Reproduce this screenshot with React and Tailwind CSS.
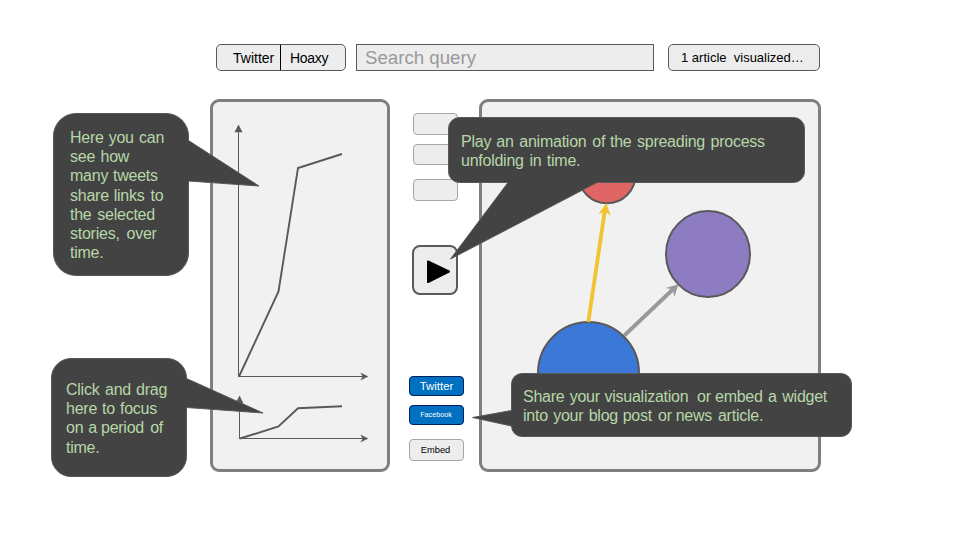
import React from "react";

const lineHere = [
  [["Here", 38.7], ["you", 30.3], ["can", 30]],
  [["see", 30.5], ["how", 34]],
  [["many", 43], ["tweets", 50]],
  [["share", 43.7], ["links", 36.8], ["to", 16]],
  [["the", 27.3], ["selected", 62]],
  [["stories,", 56.5], ["over", 34]],
  [["time.", 40]],
];

const lineDrag = [
  [["Click", 39], ["and", 31], ["drag", 36]],
  [["here", 36], ["to", 18], ["focus", 44]],
  [["on", 22.3], ["a", 12.7], ["period", 49.2], ["of", 16]],
  [["time.", 40]],
];

const linePlay = [
  [["Play", 35.3], ["an", 23], ["animation", 73], ["of", 17.7], ["the", 27], ["spreading", 73.6], ["process", 60]],
  [["unfolding", 68.5], ["in", 17.3], ["time.", 40]],
];

const lineShare = [
  [["Share", 46.7], ["your", 34.8], ["visualization", 92.5], ["or", 18], ["embed", 53], ["a", 14.3], ["widget", 50]],
  [["into", 30.2], ["your", 35.5], ["blog", 34], ["post", 35.3], ["or", 17.7], ["news", 42.3], ["article.", 50]],
];

function Lines({ lines }) {
  return (
    <div className="relative text-[16px] leading-[19.2px] tracking-[-0.25px] text-[#b6d7a8]">
      {lines.map((words, i) => (
        <p key={i} className="flex whitespace-pre">
          {words.map(([word, width], j) => (
            <span key={j} className="shrink-0" style={{ width }}>
              {word + " "}
            </span>
          ))}
        </p>
      ))}
    </div>
  );
}

function Bubble({ box, shape, children }) {
  return (
    <div className={"absolute " + box}>
      <svg className="absolute left-0 top-0 overflow-visible" width="1" height="1">
        <path d={shape} fill="#434343" stroke="#595959" strokeWidth="1" />
      </svg>
      {children}
    </div>
  );
}

function TimelinePanel() {
  return (
    <section className="h-[373px] w-[180px] rounded-[9px] border-[3px] border-[#7f7f7f] bg-[#f1f1f1]">
      <svg width="174" height="367" viewBox="213 102 174 367" fill="none" stroke="#595959">
        <path d="M238.5 377V130" />
        <path d="M238.5 124.5L242.5 132.3H234.5Z" fill="#595959" stroke="none" />
        <path d="M239 376.5H363" />
        <path d="M368.3 376.5L360.3 372.6L362.7 376.5L360.3 380.4Z" fill="#595959" stroke="none" />
        <path d="M239 376.5L278.5 291.5L298 168L342 154" strokeWidth="1.9" />
        <path d="M239.5 439V402" />
        <path d="M239.5 395.5L243.5 403.5H235.5Z" fill="#595959" stroke="none" />
        <path d="M239 438.5H363" />
        <path d="M368.3 438.5L360.3 434.6L362.7 438.5L360.3 442.4Z" fill="#595959" stroke="none" />
        <path d="M240 438.5L278.5 426.5L298 408.2L342 406.2" strokeWidth="1.9" />
      </svg>
    </section>
  );
}

function NetworkPanel() {
  return (
    <section className="h-[373px] w-[342px] rounded-[9px] border-[3px] border-[#7f7f7f] bg-[#f1f1f1]">
      <svg width="336" height="367" viewBox="482 102 336 367" fill="none">
        <ellipse cx="607" cy="175" rx="28.5" ry="28.3" fill="#e06666" stroke="#595959" strokeWidth="2" />
        <ellipse cx="708" cy="254" rx="42" ry="43" fill="#8e7cc3" stroke="#595959" strokeWidth="2" />
        <ellipse cx="588.5" cy="373" rx="50.5" ry="51" fill="#3c78d8" stroke="#595959" strokeWidth="2" />
        <path d="M588.3 322L604.9 210" stroke="#f1c232" strokeWidth="3.8" />
        <path d="M606.3 203L610.7 215.9L605.2 211.5L598.4 214.2Z" fill="#f1c232" />
        <path d="M624.3 335.5L673.3 289" stroke="#999999" strokeWidth="3.8" />
        <path d="M678.5 284.3L674.3 297L672.8 289.6L665.7 288Z" fill="#999999" />
      </svg>
    </section>
  );
}

function Controls() {
  return (
    <div className="flex w-[89px] flex-col">
      <div className="ml-[23px] mt-[14px] h-[22px] w-[45px] rounded-[4px] border border-[#a6a6a6] bg-[#ededed]" />
      <div className="ml-[23px] mt-[9px] h-[21px] w-[45px] rounded-[4px] border border-[#a6a6a6] bg-[#ededed]" />
      <div className="ml-[23px] mt-[14px] h-[22px] w-[45px] rounded-[4px] border border-[#a6a6a6] bg-[#ededed]" />
      <button className="ml-[22px] mt-[44px] h-[50px] w-[46px] rounded-[8px] border-2 border-[#595959] bg-[#ededed]">
        <svg width="42" height="46" viewBox="414 247 42 46">
          <path d="M428 261.5L449 271.5L428 282Z" stroke="#000" strokeWidth="2" strokeLinejoin="round" />
        </svg>
      </button>
      <button className="ml-[19px] mt-[81px] h-5 w-[55px] rounded-[4px] border border-[#002060] bg-[#0070c0] text-[11.4px] leading-[17px] text-white">
        Twitter
      </button>
      <button className="ml-[19px] mt-[9px] h-5 w-[55px] rounded-[4px] border border-[#002060] bg-[#0070c0] pr-px text-[7.2px] leading-[18px] text-white">
        Facebook
      </button>
      <button className="ml-[19px] mt-[14px] h-[22px] w-[55px] rounded-[4px] border border-[#a6a6a6] bg-[#ededed] pr-[2px] text-[9.3px] leading-5 text-black">
        Embed
      </button>
    </div>
  );
}

export default function App() {
  return (
    <main className="relative h-[540px] w-[960px] overflow-hidden bg-white font-['Liberation_Sans',Arial,sans-serif] text-black">
      <header className="flex h-[99px] pl-[216px] pt-[44px]">
        <div className="flex h-[27px] w-[130px] rounded-[5px] border border-[#595959] bg-[#ededed] text-[14px] leading-[27px]">
          <span className="w-[64px] border-r border-black pl-[16px]">Twitter</span>
          <span className="pl-[9px] tracking-[-0.3px]">Hoaxy</span>
        </div>
        <div className="ml-[10px] h-[27px] w-[298px] border border-[#595959] bg-[#ededed] pl-[8px] text-[18.67px] leading-[26px] text-[#999999]">
          Search query
        </div>
        <div className="ml-[14px] h-[27px] w-[152px] whitespace-pre rounded-[5px] border border-[#595959] bg-[#ededed] pl-[12px] text-[13px] leading-[26px]">
          1 article  visualized…
        </div>
      </header>
      <div className="flex pl-[210px]">
        <TimelinePanel />
        <Controls />
        <NetworkPanel />
      </div>

      <Bubble
        box="left-[53px] top-[113px] pl-[17px] pt-[15px]"
        shape="M23 .5H113A22.5 22.5 0 0 1 135.5 23V27.5L206 73L135.5 68V140A22.5 22.5 0 0 1 113 162.5H23A22.5 22.5 0 0 1 .5 140V23A22.5 22.5 0 0 1 23 .5Z"
      >
        <Lines lines={lineHere} />
      </Bubble>
      <Bubble
        box="left-[51px] top-[358px] pl-[15px] pt-[22px]"
        shape="M20 .5H116A19.5 19.5 0 0 1 135.5 20V20.5L212 55L135.5 49.5V98.5A20 20 0 0 1 116 118.5H20A19.5 19.5 0 0 1 .5 98.5V20A19.5 19.5 0 0 1 20 .5Z"
      >
        <Lines lines={lineDrag} />
      </Bubble>
      <Bubble
        box="left-[448px] top-[117px] pl-[13px] pt-[15px]"
        shape="M11.5 .5H345.5A11 11 0 0 1 356.5 11.5V54.5A11 11 0 0 1 345.5 65.5H149L2.5 142L60 65.5H11.5A11 11 0 0 1 .5 54.5V11.5A11 11 0 0 1 11.5 .5Z"
      >
        <Lines lines={linePlay} />
      </Bubble>
      <Bubble
        box="left-[511px] top-[373px] pl-[12px] pt-[14px]"
        shape="M11 .5H330A10.5 10.5 0 0 1 340.5 11V53A10.5 10.5 0 0 1 330 63.5H11A10.5 10.5 0 0 1 .5 53L-38.5 44.5L.5 37.5V11A10.5 10.5 0 0 1 11 .5Z"
      >
        <Lines lines={lineShare} />
      </Bubble>
    </main>
  );
}
